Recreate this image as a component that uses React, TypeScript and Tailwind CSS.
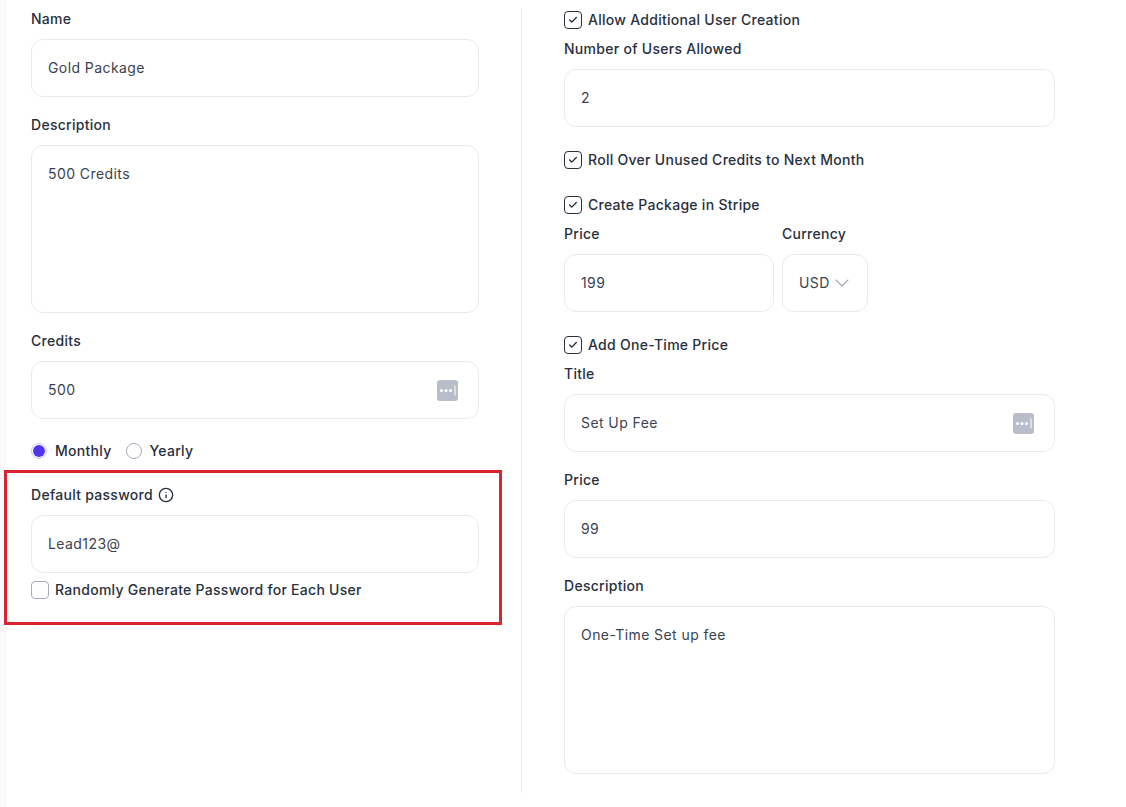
import type { ReactNode } from "react";
import { Check, ChevronDown, Info } from "lucide-react";

const font = "font-['Inter','Liberation_Sans',sans-serif]";

function KeyIcon() {
  return (
    <svg width="21" height="21" viewBox="0 0 21 21" className="shrink-0">
      <rect width="21" height="21" rx="3" fill="#b9bdc9" />
      <circle cx="4.5" cy="10.5" r="1.5" fill="#fff" />
      <circle cx="9" cy="10.5" r="1.5" fill="#fff" />
      <circle cx="13.5" cy="10.5" r="1.5" fill="#fff" />
      <rect x="17.5" y="5.5" width="1" height="10" fill="#fff" />
    </svg>
  );
}

function Label({ children }: { children: ReactNode }) {
  return <div className="h-5 leading-5 text-[14px] font-[450] tracking-[0.28px] text-[#29303d]">{children}</div>;
}

function Input({ value, icon }: { value: string; icon?: boolean }) {
  return (
    <div className="h-[58px] rounded-xl border border-[#e9eaee] bg-white pl-4 pr-5 flex items-center justify-between">
      <input
        readOnly
        value={value}
        className="min-w-0 flex-1 pb-px outline-none text-[14px] tracking-[0.42px] text-[#3b4350]"
      />
      {icon && <KeyIcon />}
    </div>
  );
}

function TextArea({ value }: { value: string }) {
  return (
    <textarea
      readOnly
      value={value}
      className="block w-full h-[168px] resize-none rounded-xl border border-[#e9eaee] bg-white px-4 py-[18px] leading-5 outline-none text-[14px] tracking-[0.42px] text-[#3b4350]"
    />
  );
}

function Field({ label, className, children }: { label: ReactNode; className?: string; children: ReactNode }) {
  return (
    <div className={className}>
      <Label>{label}</Label>
      <div className="mt-2.5">{children}</div>
    </div>
  );
}

function CheckRow({ label, checked, className }: { label: string; checked?: boolean; className?: string }) {
  return (
    <div className={`flex items-center gap-[6px] h-5 ${className ?? ""}`}>
      <span className={`w-[18px] h-[18px] rounded-[4px] border flex items-center justify-center ${checked ? "border-[#2b303b]" : "border-[#a9abbd]"}`}>
        {checked && <Check size={10} strokeWidth={3} className="text-[#1f2430]" />}
      </span>
      <span className="pb-0.5 text-[14px] font-[450] tracking-[0.28px] text-[#29303d]">{label}</span>
    </div>
  );
}

function Radio({ label, checked }: { label: string; checked?: boolean }) {
  return (
    <div className="flex items-center gap-2">
      <span className={`w-4 h-4 rounded-full border flex items-center justify-center ${checked ? "border-[#c9c6ee]" : "border-[#a9abbd]"}`}>
        {checked && <span className="w-3 h-3 rounded-full bg-[#4f35ee]" />}
      </span>
      <span className="pb-0.5 text-[14px] font-[450] tracking-[0.28px] text-[#29303d]">{label}</span>
    </div>
  );
}

export default function App() {
  return (
    <div className={`${font} flex h-[807px] overflow-hidden bg-white`}>
      <div className="w-[7px] shrink-0 bg-[#fafafa]" />

      <div className="w-[448px] shrink-0 ml-6 pt-[9px]">
        <Field label="Name"><Input value="Gold Package" /></Field>
        <Field label="Description" className="mt-[18px]"><TextArea value="500 Credits" /></Field>
        <Field label="Credits" className="mt-[18px]"><Input value="500" icon /></Field>

        <div className="mt-[22px] h-5 flex items-center gap-[14px]">
          <Radio label="Monthly" checked />
          <Radio label="Yearly" />
        </div>

        <div className="relative mt-6">
          {/* red annotation box */}
          <div className="absolute -left-[27px] -right-[23px] -top-[15px] -bottom-[25px] border-[3px] border-[#dc2330] pointer-events-none" />
          <Field
            label={
              <span className="flex items-center gap-[5px]">
                Default password
                <Info size={16} strokeWidth={2} className="text-[#29303d]" />
              </span>
            }
          >
            <Input value="Lead123@" />
          </Field>
          <CheckRow label="Randomly Generate Password for Each User" className="mt-[7px]" />
        </div>
      </div>

      <div className="ml-[42px] mt-2 h-[785px] w-px shrink-0 bg-[#e9eaee]" />

      <div className="w-[491px] shrink-0 ml-[42px] pt-2.5">
        <CheckRow label="Allow Additional User Creation" checked />
        <Field label="Number of Users Allowed" className="mt-[9px]"><Input value="2" /></Field>
        <CheckRow label="Roll Over Unused Credits to Next Month" checked className="mt-[23px]" />
        <CheckRow label="Create Package in Stripe" checked className="mt-[25px]" />

        <div className="mt-[9px] flex gap-2">
          <Field label="Price" className="w-[210px]"><Input value="199" /></Field>
          <Field label="Currency" className="w-[86px]">
            <div className="h-[58px] rounded-xl border border-[#e9eaee] bg-white pl-4 flex items-center text-[14px] tracking-[0.42px] text-[#3b4350]">
              <span className="pb-px">USD</span>
              <ChevronDown size={24} strokeWidth={1.1} className="text-[#a4a8b0]" />
            </div>
          </Field>
        </div>

        <CheckRow label="Add One-Time Price" checked className="mt-[23px]" />
        <Field label="Title" className="mt-[9px]"><Input value="Set Up Fee" icon /></Field>
        <Field label="Price" className="mt-[18px]"><Input value="99" /></Field>
        <Field label="Description" className="mt-[18px]"><TextArea value="One-Time Set up fee" /></Field>
      </div>
    </div>
  );
}
